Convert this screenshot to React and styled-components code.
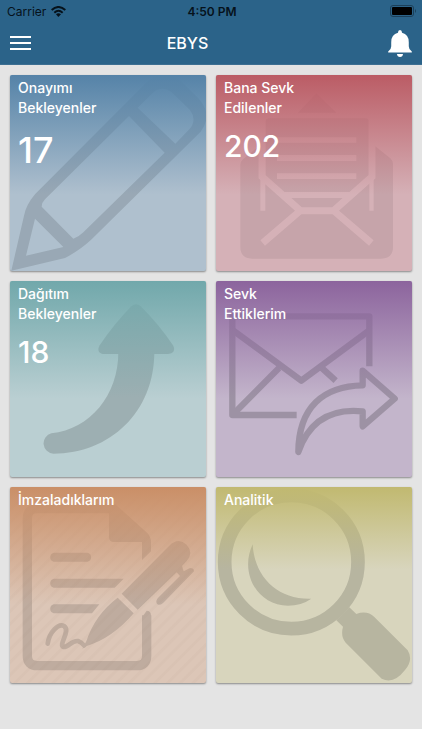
import React from 'react';
import styled, { createGlobalStyle } from 'styled-components';

const GlobalStyle = createGlobalStyle`
  body {
    margin: 0;
    background: #fff;
    font-family: Inter, "Liberation Sans", sans-serif;
  }
`;

const Page = styled.div`
  background: #e4e4e4;
`;

const Header = styled.header`
  background: #2b6389;
  border-bottom: 1px solid #3d6f92;
`;

const StatusBar = styled.div`
  display: grid;
  grid-template-columns: 1fr auto 1fr;
  align-items: center;
  height: 22px;
  padding: 0 5px 0 7px;
  font-size: 12px;
  color: #06121b;
`;

const Carrier = styled.div`
  display: flex;
  align-items: center;
  gap: 5px;
`;

const Clock = styled.time`
  font-weight: 600;
`;

const Battery = styled.svg`
  justify-self: end;
`;

const NavBar = styled.div`
  display: flex;
  align-items: center;
  height: 42px;
  padding: 0 10px;
`;

const IconButton = styled.button`
  display: flex;
  padding: 0;
  border: 0;
  background: none;
  color: #fff;
  cursor: pointer;
`;

const Title = styled.h1`
  flex: 1;
  margin: 0;
  padding-right: 44px;
  font-size: 16px;
  font-weight: 500;
  line-height: 20px;
  text-align: center;
  color: #fff;
`;

const Tiles = styled.main`
  display: grid;
  grid-template-columns: 1fr 1fr;
  gap: 10px;
  padding: 10px 10px 46px;
`;

const Tile = styled.a`
  position: relative;
  display: block;
  box-sizing: border-box;
  aspect-ratio: 1;
  overflow: hidden;
  padding: 3px 8px;
  border-radius: 2px;
  background: ${props => props.$base};
  box-shadow: 0 1px 2px rgba(0, 0, 0, 0.4);
  color: #fff;
  text-decoration: none;
`;

const Art = styled.svg`
  position: absolute;
  inset: 0;
  width: 100%;
  height: 100%;
  opacity: ${props => props.$strength};
`;

const Shade = styled.div`
  position: absolute;
  inset: 0;
  background: linear-gradient(${props => props.$tint}, transparent ${props => props.$end});
`;

const Hatch = styled.div`
  position: absolute;
  inset: 0;
  background: repeating-linear-gradient(135deg, transparent 0 5px, rgba(120, 90, 70, 0.03) 6px 8px, transparent 9px);
`;

const Label = styled.div`
  position: relative;
  width: 90px;
  font-size: 14px;
  font-weight: 500;
  line-height: 20px;
`;

const Count = styled.div`
  position: relative;
  margin-top: 9px;
  font-size: ${props => (props.$large ? '36px' : '30px')};
  font-weight: 500;
  line-height: ${props => (props.$large ? '46px' : '38px')};
`;

const PencilArt = () => (
  <path
    fillRule="evenodd"
    d="M34 617L72 452Q78 420 105 388L440 52Q490 8 545 50L595 100Q640 150 602 200L275 523Q240 556 195 579Z
      M413 128L526 236L568 193Q592 165 570 135L520 86Q488 58 458 84Z
      M387 153L135 403Q125 413 125 425L220 521Q235 517 250 502L494 263Z
      M105 461L78 572L190 546Z"
  />
);

const LetterArt = () => (
  <>
    <mask id="letter-cut" maskUnits="userSpaceOnUse" x="0" y="0" width="645" height="645">
      <rect width="645" height="645" fill="#fff" />
      <path fill="#000" d="M210 217H448V233H210ZM210 270H448V288H210ZM210 325H448V342H210ZM228 381H432L412 399H250Z" />
      <path d="M165 150V335L280 437H380L495 335V150M280 437L167 534M380 437L493 534" fill="none" stroke="#000" strokeWidth="21" />
    </mask>
    <path d="M273 143L328 85L388 143Z" />
    <g mask="url(#letter-cut)">
      <path d="M100 300Q100 290 108 283L160 240V437H500V240L550 280Q558 287 558 298V545Q558 581 522 581H136Q100 581 100 545Z M175 437V172Q175 160 187 160H475Q487 160 487 172V437Z" />
    </g>
  </>
);

const ArrowArt = () => (
  <>
    <path d="M394 103Q408 91 422 103Q475 155 519 220C528 236 518 246 504 246H312C298 246 290 236 299 220Q343 155 394 103Z" />
    <path d="M463 240C463 420 330 545 160 545A31 31 0 0 1 154 484C270 472 355 370 355 240Z" />
  </>
);

const ForwardArt = () => (
  <g fill="none" stroke="#000" strokeWidth="19" strokeLinejoin="round">
    <path d="M487 283V133H76V429H269" />
    <path d="M78 175L283 326L487 175M216 288L80 425M340 284L386 326" />
    <path d="M274 540C275 405 350 342 467 340V296L563 380L467 463V418C370 408 305 450 274 540Z" />
  </g>
);

const SignArt = () => (
  <>
    <path fill="none" stroke="#000" strokeWidth="28" d="M335 92H112Q82 92 82 122V533Q82 563 112 563H410Q440 563 440 533V412" />
    <path d="M426 418L440 398Q453 398 453 412V425H426Z" />
    <path d="M327 78H345L442 165Q453 177 453 192V220L426 246V192H342Q327 192 327 177Z" />
    <path d="M161 224H263A14 14 0 0 1 263 251H161A14 14 0 0 1 161 224ZM161 302H371L344 329H161A14 14 0 0 1 161 302ZM161 379H298L276 406H161A14 14 0 0 1 161 379Z" />
    <path d="M365 347L508 203Q535 177 560 200Q582 225 560 249L546 264L551 280L570 270Q582 270 582 280L490 374Q476 386 470 376Q466 368 476 358L540 294L530 283L413 395Z" />
    <path d="M353 359L401 406Q335 482 262 503L247 512L259 490Q285 410 353 359Z" />
    <path
      fill="none"
      stroke="#000"
      strokeWidth="14"
      strokeLinecap="round"
      d="M143 497C148 462 175 435 192 444C214 458 173 502 191 507C208 507 213 487 234 489Q244 492 252 502"
    />
  </>
);

const MagnifierArt = () => (
  <>
    <circle cx="253" cy="252" r="200" fill="none" stroke="#000" strokeWidth="41" />
    <path d="M137 199C96 285 152 383 243 383Q283 383 313 362C210 365 142 295 137 199Z" />
    <path d="M427 388L448 408Q480 396 502 417L602 517Q620 545 594 576Q560 620 524 602L416 494Q400 475 408 446L388 427Z" />
  </>
);

const tiles = [
  { label: 'Onayımı Bekleyenler', count: 17, large: true, base: '#afc0ce', tint: '#5583a8', end: '61%', strength: 0.12, box: '30 30 588 588', art: PencilArt },
  { label: 'Bana Sevk Edilenler', count: 202, base: '#d5b1b7', tint: '#bb5c65', end: '61%', strength: 0.07, box: '27 30 588 588', art: LetterArt },
  { label: 'Dağıtım Bekleyenler', count: 18, base: '#bacfd2', tint: '#71a8ab', end: '60%', strength: 0.15, box: '30 27 588 588', art: ArrowArt },
  { label: 'Sevk Ettiklerim', base: '#c3b5cb', tint: '#8c649d', end: '60%', strength: 0.19, box: '27 27 588 588', art: ForwardArt },
  { label: 'İmzaladıklarım', base: '#dcc6b7', tint: '#ca8f67', end: '60%', strength: 0.13, box: '30 27 588 588', art: SignArt, hatch: true },
  { label: 'Analitik', base: '#d8d5bd', tint: '#c1b970', end: '42%', strength: 0.15, box: '27 27 588 588', art: MagnifierArt },
];

const App = () => (
  <>
    <GlobalStyle />
    <Page>
      <Header>
        <StatusBar>
          <Carrier>
            Carrier
            <svg width="15" height="11" viewBox="0 0 45 33" fill="none" stroke="#06121b" strokeWidth="6" aria-hidden="true">
              <path d="M2 12Q22 -6 43 12M10 20Q22 9 35 20" />
              <path d="M15 25Q22 19 30 25L22 33Z" fill="#06121b" stroke="none" />
            </svg>
          </Carrier>
          <Clock>4:50 PM</Clock>
          <Battery width="27" height="12" viewBox="0 0 27 12" aria-hidden="true">
            <rect x="0.5" y="0.5" width="23" height="11" rx="2.5" fill="none" stroke="#1c4059" />
            <rect x="2" y="2" width="20" height="8" rx="1" />
            <path d="M25 4Q27 6 25 8Z" fill="#1c4059" />
          </Battery>
        </StatusBar>
        <NavBar>
          <IconButton aria-label="Menü">
            <svg width="21" height="16" viewBox="0 0 21 16" fill="currentColor">
              <path d="M0 1H21V3H0ZM0 7H21V9H0ZM0 13H21V15H0Z" />
            </svg>
          </IconButton>
          <Title>EBYS</Title>
          <IconButton aria-label="Bildirimler">
            <svg width="24" height="27" viewBox="0 0 70 80" fill="currentColor">
              <path d="M35 0Q41 0 41 8Q61 13 61 36V48Q61 58 70 64V67H0V64Q9 58 9 48V36Q9 13 29 8Q29 0 35 0Z" />
              <path d="M26 71H44Q43 80 35 80Q27 80 26 71Z" />
            </svg>
          </IconButton>
        </NavBar>
      </Header>
      <Tiles>
        {tiles.map(({ art: Drawing, ...tile }) => (
          <Tile key={tile.label} href="#" $base={tile.base}>
            <Art viewBox={tile.box} $strength={tile.strength} aria-hidden="true">
              <Drawing />
            </Art>
            {tile.hatch && <Hatch />}
            <Shade $tint={tile.tint} $end={tile.end} />
            <Label>{tile.label}</Label>
            {tile.count && <Count $large={tile.large}>{tile.count}</Count>}
          </Tile>
        ))}
      </Tiles>
    </Page>
  </>
);

export default App;
